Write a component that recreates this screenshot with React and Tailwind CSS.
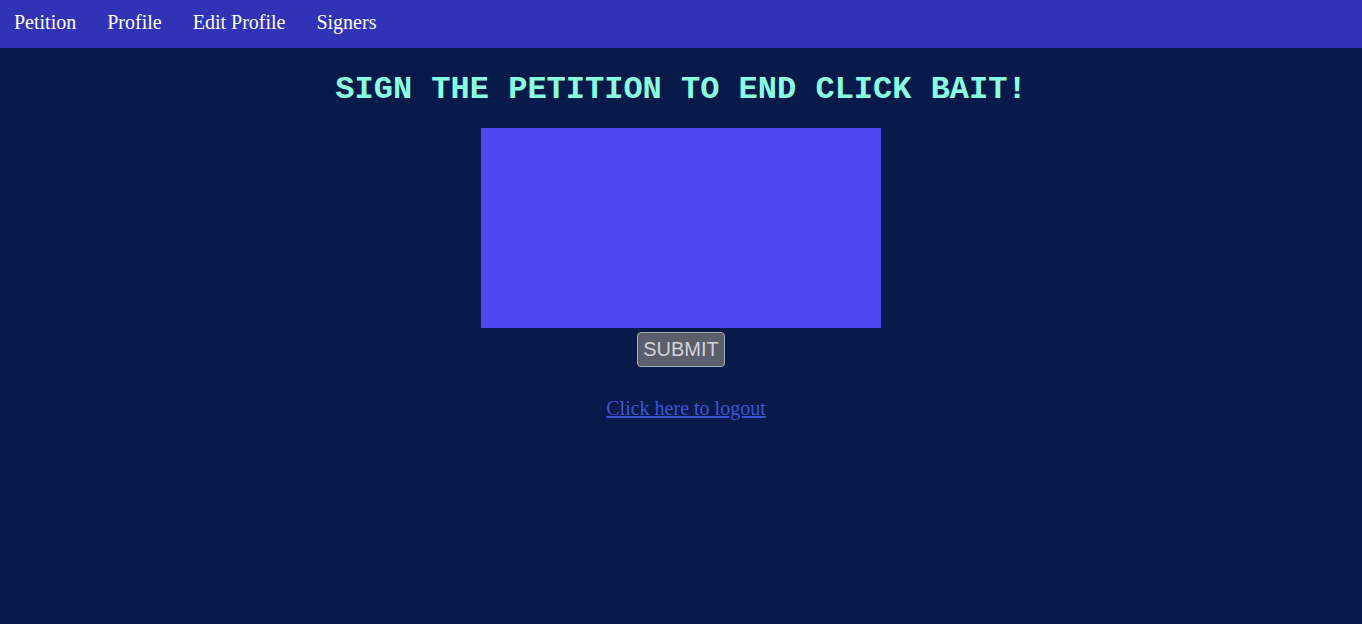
export default function App() {
  const serif = { fontFamily: '"Liberation Serif", "Times New Roman", serif' };
  return (
    <div className="min-h-[624px] w-full bg-[#081a4a]" style={serif}>
      <nav className="flex h-12 items-center gap-[31px] bg-[#3033b6] pl-[14px] pb-[4px] text-[20px] leading-[23px] text-white">
        <a>Petition</a>
        <a>Profile</a>
        <a>Edit Profile</a>
        <a>Signers</a>
      </nav>
      <main className="flex flex-col items-center">
        <h1
          className="mt-[24px] mb-[20px] text-[32px] leading-[36px] font-bold text-[#8affe0]"
          style={{ fontFamily: '"Liberation Mono", "Courier New", monospace' }}
        >
          SIGN THE PETITION TO END CLICK BAIT!
        </h1>
        <div className="h-[200px] w-[400px] bg-[#4f46ef]" />
        <button
          className="mt-[4px] h-[35px] w-[88px] rounded-[4px] border border-[#a9abb5] bg-[#5b5e6b] text-[20px] leading-[23px] text-[#d4d4d8]"
          style={{ fontFamily: '"Liberation Sans", Arial, sans-serif' }}
        >
          SUBMIT
        </button>
        <a className="mt-[30px] ml-[10px] text-[20px] leading-[23px] text-[#3c55d6] underline" href="#">
          Click here to logout
        </a>
      </main>
    </div>
  );
}
